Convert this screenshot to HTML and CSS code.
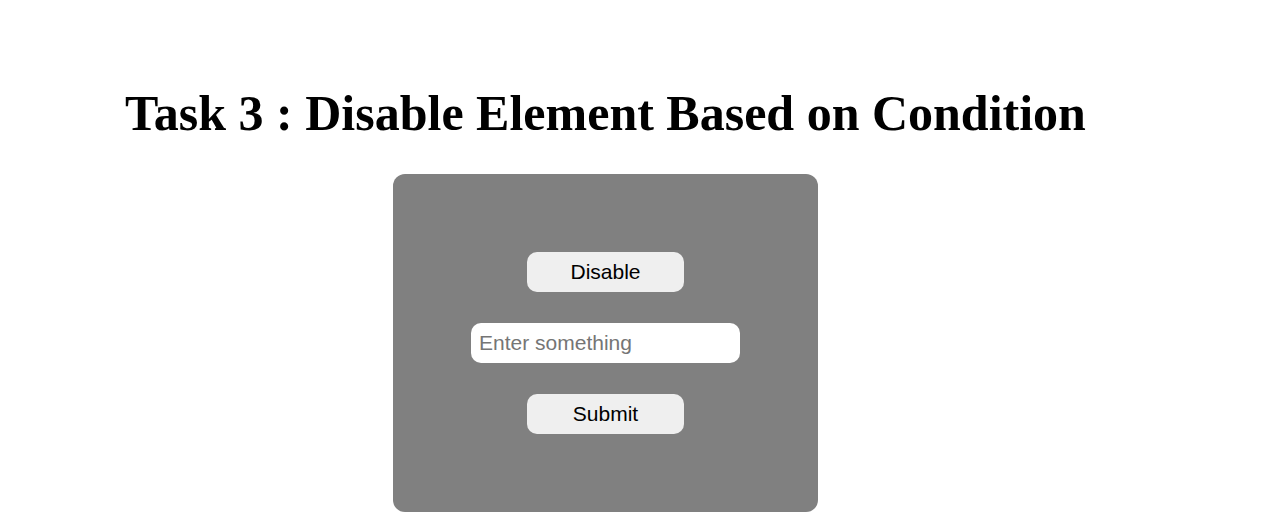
FILE: index.html
```html
<!DOCTYPE html>
<html>
<head>
<meta charset="utf-8">
<link rel="stylesheet" href="styles.css">
</head>
<body>
<div class="page">
  <h1 class="title">Task 3 : Disable Element Based on Condition</h1>
  <div class="card">
    <button class="btn">Disable</button>
    <input class="field" type="text" placeholder="Enter something">
    <button class="btn">Submit</button>
  </div>
</div>
</body>
</html>
```
FILE: styles.css
```css
html, body {
  margin: 0;
  padding: 0;
  background: #fff;
}
.page {
  width: 1211px;
  display: flex;
  flex-direction: column;
  align-items: center;
  padding-top: 84px;
}
.title {
  font-family: "Liberation Serif", "Times New Roman", serif;
  font-weight: bold;
  font-size: 50px;
  line-height: 58px;
  margin: 0 0 32px 0;
  color: #000;
}
.card {
  width: 425px;
  height: 338px;
  box-sizing: border-box;
  background: #808080;
  border-radius: 12px;
  display: flex;
  flex-direction: column;
  align-items: center;
  justify-content: center;
  gap: 31px;
}
.btn {
  width: 157px;
  height: 40px;
  border: none;
  border-radius: 10px;
  background: #efefef;
  font-family: "Liberation Sans", Arial, sans-serif;
  font-size: 21px;
  color: #000;
  padding: 0;
}
.field {
  width: 269px;
  height: 40px;
  box-sizing: border-box;
  border: none;
  border-radius: 10px;
  background: #fff;
  font-family: "Liberation Sans", Arial, sans-serif;
  font-size: 21px;
  padding: 0 8px;
  outline: none;
}
.field::placeholder {
  color: #757575;
}
```
